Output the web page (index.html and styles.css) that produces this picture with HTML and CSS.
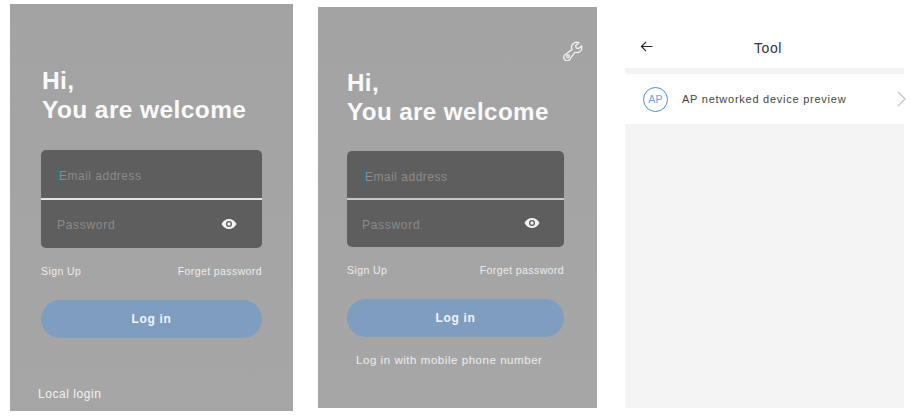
FILE: index.html
```html
<!DOCTYPE html>
<html lang="en">
<head>
<meta charset="utf-8">
<title>Login screens</title>
<link rel="stylesheet" href="styles.css">
</head>
<body>
<main class="page">
  <section class="screen screen-a">
    <h1 class="title">Hi,<br>You are welcome</h1>
    <div class="fields">
      <div class="field field-email"><span class="caret"></span><span>Email address</span></div>
      <div class="field field-pass"><span>Password</span>
        <svg class="eye" viewBox="0 0 16 12"><path d="M0.5 6C2.3 2.6 5 1 8 1s5.700 1.600 7.500 5C13.700 9.400 11 11 8 11S2.300 9.400 0.500 6Z" fill="#f2f2f2"/><circle cx="8" cy="6" r="3" fill="#5c5c5c"/><circle cx="8" cy="6" r="1.700" fill="#f2f2f2"/></svg>
      </div>
    </div>
    <div class="links"><span>Sign Up</span><span>Forget password</span></div>
    <div class="login">Log in</div>
    <div class="local">Local login</div>
  </section>

  <section class="screen screen-b">
    <div class="tool-row">
      <svg class="wrench" viewBox="0 0 22 22" fill="none" stroke="#f4f4f4" stroke-width="1.400" stroke-linejoin="round">
        <path d="M17.600 2.100A5.600 5.600 0 0 0 10 9.500L3.200 14.400A3.800 3.800 0 1 0 8.200 19.200L13 12.400A5.600 5.600 0 0 0 20.400 5.400L17 8.300 14.400 7.500 14 5Z"/>
        <circle cx="5.500" cy="16.800" r="1.500"/>
      </svg>
    </div>
    <h1 class="title">Hi,<br>You are welcome</h1>
    <div class="fields">
      <div class="field field-email"><span class="caret"></span><span>Email address</span></div>
      <div class="field field-pass"><span>Password</span>
        <svg class="eye" viewBox="0 0 16 12"><path d="M0.5 6C2.3 2.6 5 1 8 1s5.700 1.600 7.500 5C13.700 9.400 11 11 8 11S2.300 9.400 0.500 6Z" fill="#f2f2f2"/><circle cx="8" cy="6" r="3" fill="#5c5c5c"/><circle cx="8" cy="6" r="1.700" fill="#f2f2f2"/></svg>
      </div>
    </div>
    <div class="links"><span>Sign Up</span><span>Forget password</span></div>
    <div class="login">Log in</div>
    <div class="mobile">Log in with mobile phone number</div>
  </section>

  <section class="screen-c">
    <header class="bar">
      <svg class="back" viewBox="0 0 14 12" fill="none" stroke="#222" stroke-width="1.300"><path d="M13.500 6H1.500M6.500 1 1.500 6 6.500 11"/></svg>
      <span class="bar-title">Tool</span>
    </header>
    <div class="row">
      <span class="badge">AP</span>
      <span class="row-text">AP networked device preview</span>
      <svg class="chev" viewBox="0 0 9 16" fill="none" stroke="#c4c4c4" stroke-width="1.300"><path d="M1 1l7 7-7 7"/></svg>
    </div>
    <div class="rest"></div>
  </section>
</main>
</body>
</html>
```

FILE: styles.css
```css
* { box-sizing: border-box; }
html, body { margin: 0; padding: 0; background: #fff; }
body { font-family: "Liberation Sans", Arial, sans-serif; }
.page { display: flex; align-items: flex-start; width: 911px; height: 420px; padding-left: 10px; overflow: hidden; }

.screen { display: flex; flex-direction: column; background: linear-gradient(#a3a3a3, #a6a6a6); color: #f4f4f4; }
.screen-a { width: 283px; height: 407px; margin-top: 4px; padding: 62px 31px 0; }
.screen-b { width: 279px; height: 401px; margin: 7px 0 0 25px; padding: 34px 33px 0 29px; }

.title { margin: 0 0 0 1px; font-size: 24.500px; line-height: 29px; font-weight: 700; letter-spacing: 0.400px; color: #fafafa; }
.screen-b .title { margin: 7px 0 0; font-size: 24.200px; letter-spacing: 0.400px; }

.fields { display: flex; flex-direction: column; margin-top: 26px; height: 98px; border-radius: 5px; overflow: hidden; background: #5e5e5e; }
.screen-b .fields { margin-top: 25px; height: 96px; }
.field { display: flex; align-items: center; font-size: 12px; color: #8b8b8b; }
.field-email { height: 50px; padding: 4px 0 0 16px; border-bottom: 2px solid #e4e4e4; letter-spacing: 0.500px; }
.screen-b .field-email { height: 49px; border-bottom-color: #c8c8c8; }
.field-pass { flex: 1; justify-content: space-between; padding: 2px 25px 0 16px; letter-spacing: 0.700px; }
.screen-b .field-pass { padding: 2px 24px 0 15px; }
.caret { width: 2px; height: 16px; background: #2f6f8c; }
.eye { width: 16px; height: 12px; margin-top: -3px; }

.links { display: flex; justify-content: space-between; margin-top: 17px; font-size: 10.500px; line-height: 13px; letter-spacing: 0.400px; color: #ececec; }
.login { display: flex; align-items: center; justify-content: center; height: 38px; margin-top: 22px; border-radius: 19px; background: #7f9dbf; font-size: 12px; font-weight: 700; letter-spacing: 0.700px; color: #f2f5f8; }
.screen-b .login { margin-top: 22px; }
.local { margin: 49px 0 0 -3px; font-size: 12px; line-height: 14px; letter-spacing: 0.550px; color: #f2f2f2; }
.mobile { margin: 16px 0 0 9px; font-size: 11.500px; line-height: 14px; letter-spacing: 0.550px; color: #eeeeee; white-space: nowrap; }

.tool-row { display: flex; justify-content: flex-end; height: 20px; margin-right: -19px; }
.wrench { width: 20px; height: 20px; }

.screen-c { display: flex; flex-direction: column; width: 279px; height: 408px; margin-left: 28px; background: #fff; }
.bar { position: relative; display: flex; align-items: center; justify-content: center; height: 74px; padding: 28px 0 0 7px; border-bottom: 6px solid #f3f3f3; }
.back { position: absolute; left: 15px; top: 41px; width: 13px; height: 11px; }
.bar-title { font-size: 14px; letter-spacing: 0.600px; color: #333; }
.row { display: flex; align-items: center; height: 50px; padding: 0 0 0 18px; }
.badge { display: flex; align-items: center; justify-content: center; width: 25px; height: 25px; border: 1.300px solid #4a90d6; border-radius: 50%; font-size: 10.500px; letter-spacing: 0.300px; color: #6aa3dd; }
.row-text { margin-left: 14px; flex: 1; font-size: 11px; letter-spacing: 0.750px; color: #444; }
.chev { width: 9px; height: 16px; margin-right: -2px; }
.rest { flex: 1; background: #f4f4f4; }
```
